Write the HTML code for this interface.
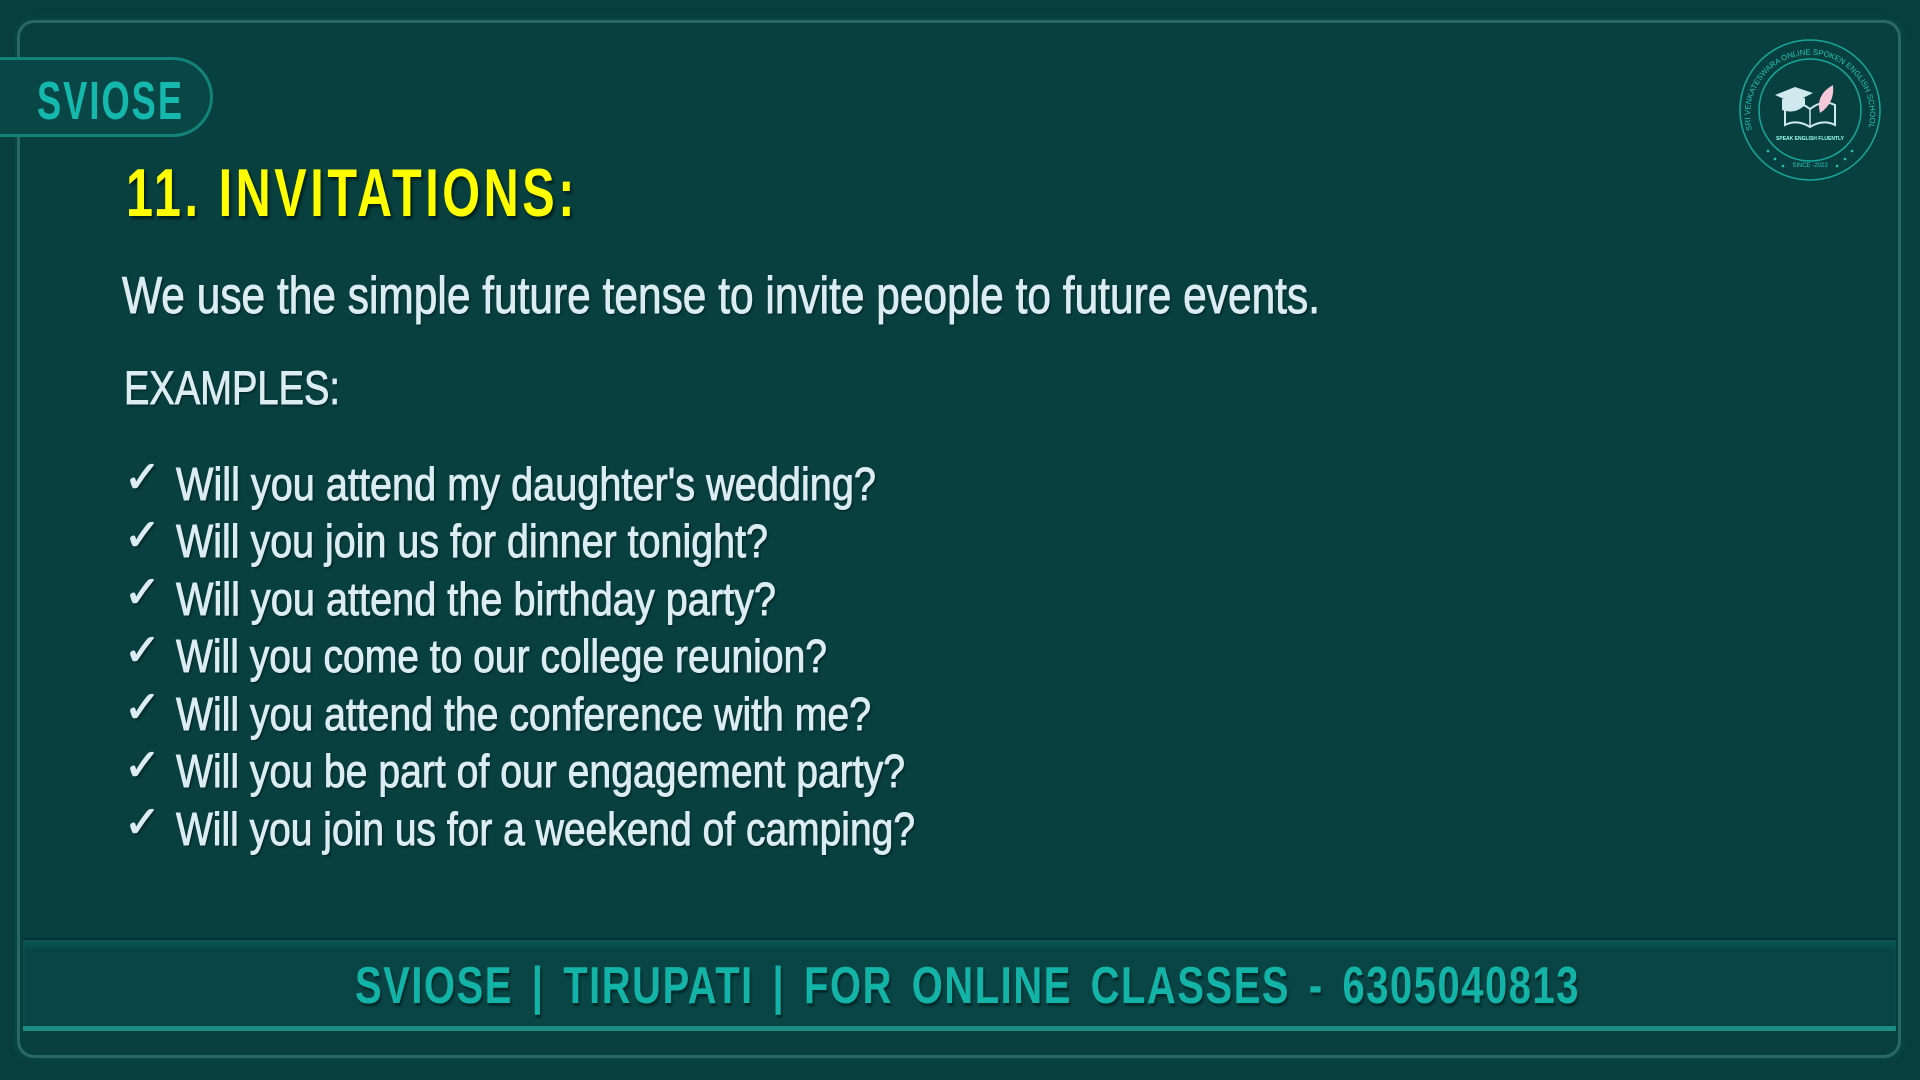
<!DOCTYPE html>
<html><head><meta charset="utf-8"><style>
html,body{margin:0;padding:0;}
body{width:1920px;height:1080px;background:#073f3e;position:relative;overflow:hidden;font-family:"Liberation Sans",sans-serif;}
.frame{position:absolute;left:20px;top:23px;width:1878px;height:1032px;border-radius:14px;background:#08403f;box-shadow:0 0 0 3px #2a6866,0 0 8px 3px #0c4d4b;}
.t{position:absolute;white-space:nowrap;transform-origin:0 0;display:inline-block;}
.pill{position:absolute;left:0;top:57px;width:210px;height:74px;border:3px solid #12837b;border-left:none;border-radius:0 40px 40px 0;background:#094746;}
.lt{color:#dcecf3;text-shadow:2px 2px 2px #03292a;-webkit-text-stroke:0.9px #dcecf3;}
.foot{position:absolute;left:23px;top:938px;width:1873px;height:86px;background:#094544;border-top:2px solid #053231;border-bottom:5px solid #1b8c84;box-shadow:inset 0 6px 6px #0c5553;}
</style></head><body>
<div class="frame"></div>
<div class="pill"></div>
<div class="foot"></div>
<span class="t" id="a0" style="font-weight:bold;font-size:54px;color:#14b8ad;top:70px;letter-spacing:3px;">SVIOSE</span>
<span class="t" id="a1" style="font-weight:bold;font-size:68px;color:#ffff00;top:154px;letter-spacing:5px;text-shadow:3px 3px 3px #022020;">11. INVITATIONS:</span>
<span class="t lt" id="a2" style="font-size:52px;top:266px;">We use the simple future tense to invite people to future events.</span>
<span class="t lt" id="a3" style="font-size:47px;top:360px;">EXAMPLES:</span>
<span class="t lt" id="b0" style="font-size:46px;top:457px;">Will you attend my daughter's wedding?</span>
<span class="t lt" id="b1" style="font-size:46px;top:514px;">Will you join us for dinner tonight?</span>
<span class="t lt" id="b2" style="font-size:46px;top:572px;">Will you attend the birthday party?</span>
<span class="t lt" id="b3" style="font-size:46px;top:629px;">Will you come to our college reunion?</span>
<span class="t lt" id="b4" style="font-size:46px;top:687px;">Will you attend the conference with me?</span>
<span class="t lt" id="b5" style="font-size:46px;top:744px;">Will you be part of our engagement party?</span>
<span class="t lt" id="b6" style="font-size:46px;top:802px;">Will you join us for a weekend of camping?</span>
<span class="t" id="f0" style="font-weight:bold;font-size:52px;color:#13b3a8;top:956px;letter-spacing:2px;word-spacing:8px;text-shadow:2px 3px 2px #022a2a;">SVIOSE | TIRUPATI | FOR ONLINE CLASSES - 6305040813</span>
<div id="checks"></div>
<svg style="position:absolute;left:1735px;top:35px" width="150" height="150" viewBox="0 0 150 150">
<circle cx="75" cy="75" r="70" fill="none" stroke="#16a79c" stroke-width="1.5"/>
<circle cx="75" cy="75" r="51" fill="none" stroke="#16a79c" stroke-width="1.5"/>
<defs><path id="arc" d="M 17 95 A 60 60 0 1 1 133 95"/></defs>
<text font-family="Liberation Sans Narrow, Liberation Sans, sans-serif" font-size="7.8" fill="#27c3b7"><textPath href="#arc">SRI VENKATESWARA ONLINE SPOKEN ENGLISH SCHOOL</textPath></text>
<polygon points="40,60 60,52 78,58 58,68" fill="#cfe9ee"/>
<path d="M47 64 L47 75 Q60 80 70 70 L70 63" fill="#cfe9ee"/>
<path d="M50 70 Q62 64 75 74 Q88 64 100 70 L100 90 Q88 84 75 92 Q62 84 50 90 Z" fill="none" stroke="#cfe9ee" stroke-width="2"/>
<line x1="75" y1="74" x2="75" y2="92" stroke="#cfe9ee" stroke-width="1.5"/>
<path d="M85 78 Q80 60 98 50 Q100 68 85 78 Z" fill="#f4c8d8"/>
<text x="75" y="105" text-anchor="middle" font-size="5" font-weight="bold" fill="#9fe">SPEAK ENGLISH FLUENTLY</text>
<text x="75" y="132" text-anchor="middle" font-size="6" fill="#27c3b7">SINCE -2023</text>
<g fill="#27c3b7"><circle cx="33" cy="116" r="1.3"/><circle cx="40" cy="124" r="1.3"/><circle cx="48" cy="131" r="1.3"/><circle cx="117" cy="116" r="1.3"/><circle cx="110" cy="124" r="1.3"/><circle cx="102" cy="131" r="1.3"/></g>
</svg>
<script>
var T={a0:[37,147],a1:[126,452],a2:[122,1198],a3:[124,216],b0:[176,700],b1:[176,592],b2:[176,600],b3:[176,651],b4:[176,695],b5:[176,729],b6:[176,739],f0:[355,1225]};
for(var k in T){var e=document.getElementById(k);var w=e.getBoundingClientRect().width;e.style.left=T[k][0]+'px';e.style.transform='scaleX('+(T[k][1]/w)+')';}
var c=document.getElementById('checks');
for(var i=0;i<7;i++){var s=document.createElement('span');s.className='t lt';s.style.cssText='font-family:"DejaVu Sans",sans-serif;font-size:44px;font-weight:bold;left:124px;top:'+(452+i*57.5)+'px;-webkit-text-stroke:1px #dcecf3;';s.textContent='\u2713';c.appendChild(s);}
</script>
</body></html>
